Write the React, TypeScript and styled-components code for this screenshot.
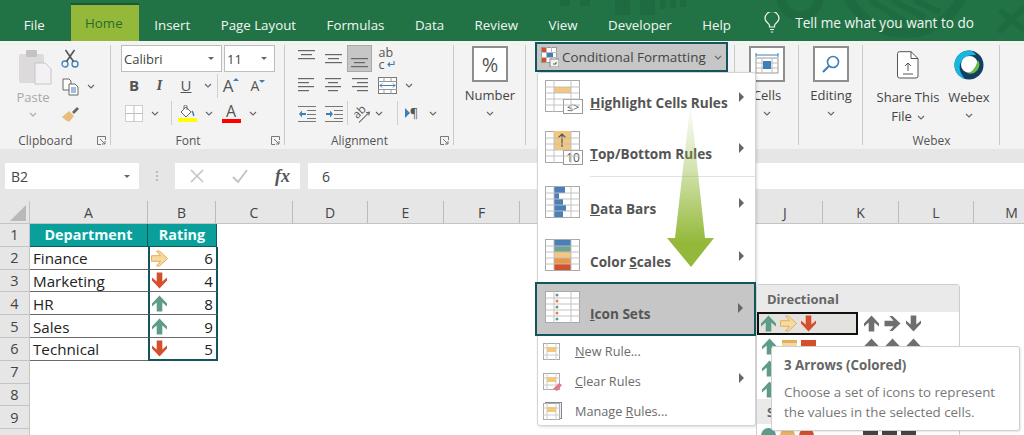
import React from "react";
import styled, { createGlobalStyle } from "styled-components";

const Global = createGlobalStyle`
  html, body { margin: 0; padding: 0; width: 1024px; height: 435px; overflow: hidden; background: #fff; }
  body { font-family: "Open Sans", "Liberation Sans", sans-serif; color: #444; }
`;

const TEAL = "#12565b";

const Page = styled.div`
  position: relative;
  width: 1024px;
  height: 435px;
  overflow: hidden;
  display: flex;
  flex-direction: column;
`;

/* ---------- title bar ---------- */
const TitleBar = styled.div`
  position: relative;
  height: 41px;
  flex: none;
  background: #217346;
  display: flex;
  align-items: stretch;
  padding-left: 8.5px;
  overflow: hidden;
`;
const Pattern = styled.svg`
  position: absolute;
  left: 520px;
  top: 0;
`;
const Tab = styled.div<{ $active?: boolean }>`
  position: relative;
  padding: 3px 15.25px 0;
  margin-top: 3px;
  display: flex;
  align-items: center;
  font-size: 13.3px;
  color: ${(p) => (p.$active ? "#2a6a2c" : "#f1f6f2")};
  background: ${(p) => (p.$active ? "#94b93a" : "transparent")};
  border-top: 2px solid ${(p) => (p.$active ? "#1c5a36" : "transparent")};
  box-sizing: border-box;
  ${(p) => (p.$active ? "margin-left: 11px; margin-right: 0; padding: 0 14px; width: 68px;" : "")}
`;
const TellMe = styled.div`
  position: relative;
  display: flex;
  align-items: center;
  margin-left: 18px;
  gap: 15px;
  padding-top: 3px;
  font-size: 13.6px;
  color: #f1f6f2;
`;

/* ---------- ribbon ---------- */
const Ribbon = styled.div`
  height: 108px;
  flex: none;
  background: #f3f3f3;
  display: flex;
`;
const Group = styled.div<{ $w: number }>`
  width: ${(p) => p.$w}px;
  flex: none;
  box-sizing: border-box;
  padding-top: 4px;
  display: flex;
  flex-direction: column;
  background: linear-gradient(#c9c9c9, #c9c9c9) right 4px / 1.5px 100px no-repeat;
`;
const GroupBody = styled.div`
  height: 82px;
  flex: none;
  display: flex;
`;
const GroupLabel = styled.div<{ $launcher?: boolean }>`
  position: relative;
  height: 22px;
  box-sizing: border-box;
  display: flex;
  align-items: center;
  justify-content: center;
  font-size: 12px;
  color: #555;
  padding-top: 4px;
  padding-right: ${(p) => (p.$launcher ? 20 : 0)}px;
`;
const Launcher = styled.svg`
  position: absolute;
  right: 5px;
  top: 9px;
`;
const PasteCol = styled.div`
  width: 50px;
  margin-left: 8px;
  display: flex;
  flex-direction: column;
  align-items: center;
  padding-top: 4px;
  color: #a8a8a8;
  font-size: 13px;
`;
const PasteIconWrap = styled.div`
  margin-left: 3px;
  line-height: 0;
`;
const PasteText = styled.span`
  margin-top: 3px;
  line-height: 18px;
`;
const Stack = styled.div<{ $ml?: number }>`
  display: flex;
  flex-direction: column;
  margin-left: ${(p) => p.$ml ?? 0}px;
`;
const ToolRow = styled.div<{ $h?: number; $pl?: number }>`
  height: ${(p) => p.$h ?? 27}px;
  flex: none;
  display: flex;
  align-items: center;
  padding-left: ${(p) => p.$pl ?? 0}px;
`;
const Tool = styled.div<{ $w: number; $selected?: boolean; $top?: number }>`
  width: ${(p) => p.$w}px;
  height: 100%;
  flex: none;
  display: flex;
  align-items: ${(p) => (p.$top !== undefined ? "flex-start" : "center")};
  justify-content: center;
  box-sizing: border-box;
  padding-top: ${(p) => p.$top ?? 0}px;
  color: #555;
  background: ${(p) => (p.$selected ? "#c6c6c6" : "transparent")};
  border: ${(p) => (p.$selected ? "1px solid #a9a9a9" : "0")};
`;
const Glyph = styled.span<{ $size?: number; $bold?: boolean; $italic?: boolean; $under?: boolean; $serif?: boolean }>`
  font-size: ${(p) => p.$size ?? 14}px;
  font-weight: ${(p) => (p.$bold ? 700 : 400)};
  font-style: ${(p) => (p.$italic ? "italic" : "normal")};
  text-decoration: ${(p) => (p.$under ? "underline" : "none")};
  font-family: ${(p) => (p.$serif ? '"Liberation Serif", serif' : "inherit")};
  line-height: 1;
  color: #555;
`;
const VRule = styled.div`
  width: 1px;
  height: 24px;
  flex: none;
  background: #cfcfcf;
`;
const Select = styled.div<{ $w: number; $ml?: number }>`
  width: ${(p) => p.$w}px;
  margin-left: ${(p) => p.$ml ?? 0}px;
  height: 27px;
  box-sizing: border-box;
  border: 1px solid #bdbdbd;
  background: #fff;
  display: flex;
  align-items: center;
  justify-content: space-between;
  padding: 0 7px 0 2px;
  font-size: 13px;
  color: #444;
`;
const DownCaret = styled.span`
  width: 0;
  height: 0;
  border-left: 3px solid transparent;
  border-right: 3px solid transparent;
  border-top: 3px solid #666;
`;
const FontBar = styled.div<{ $color: string }>`
  width: 19px;
  height: 4px;
  background: ${(p) => p.$color};
`;
const ColorTool = styled.div`
  display: flex;
  flex-direction: column;
  align-items: center;
  line-height: 1;
`;
const AAUp = styled.div`
  display: flex;
  align-items: flex-start;
`;
const WrapText = styled.div`
  display: flex;
  flex-direction: column;
  font-size: 12.5px;
  line-height: 12px;
  color: #555;
`;
const WrapLine = styled.span`
  display: flex;
  align-items: center;
  gap: 1px;
`;
const RotWrap = styled.div`
  display: flex;
  flex-direction: column;
  align-items: center;
  font-size: 11.5px;
  line-height: 10px;
  color: #555;
  transform: rotate(-45deg);
`;
const BigCol = styled.div<{ $w: number; $ml?: number }>`
  width: ${(p) => p.$w}px;
  margin-left: ${(p) => p.$ml ?? 0}px;
  flex: none;
  display: flex;
  flex-direction: column;
  align-items: center;
  font-size: 13px;
  color: #444;
`;
const SquareBtn = styled.div`
  width: 36px;
  height: 36px;
  margin-top: 1px;
  box-sizing: border-box;
  border: 2px solid #8e8e8e;
  background: #fff;
  display: flex;
  align-items: center;
  justify-content: center;
  font-size: 20px;
  color: #555;
`;
const BigText = styled.div`
  margin-top: 4px;
  line-height: 19px;
  text-align: center;
  white-space: nowrap;
`;
const ChevronWrap = styled.div`
  margin-top: 6px;
  line-height: 0;
`;
const InlineChev = styled.span`
  margin-left: 5px;
  display: inline-block;
  vertical-align: middle;
  line-height: 0;
`;
const CFButton = styled.div`
  width: 193px;
  height: 30px;
  margin: -3px 0 0 9px;
  box-sizing: border-box;
  border: 2px solid ${TEAL};
  background: #c6c6c6;
  display: flex;
  align-items: center;
  gap: 3px;
  padding-left: 4px;
  font-size: 13.4px;
  color: #444;
`;
const Strip = styled.div`
  height: 11px;
  flex: none;
  background: #e6e6e6;
`;

/* ---------- formula bar ---------- */
const FormulaBar = styled.div`
  height: 41px;
  flex: none;
  box-sizing: border-box;
  background: #e6e6e6;
  padding: 3px 0 12px 5px;
  display: flex;
`;
const NameBox = styled.div`
  width: 134px;
  flex: none;
  box-sizing: border-box;
  background: #fff;
  display: flex;
  align-items: center;
  justify-content: space-between;
  padding: 0 9px 0 6px;
  font-size: 14px;
  color: #444;
`;
const Grip = styled.div`
  width: 36px;
  flex: none;
  display: flex;
  flex-direction: column;
  align-items: center;
  justify-content: center;
  gap: 2px;
`;
const GripDot = styled.i`
  width: 2px;
  height: 2px;
  background: #bbb;
  display: block;
`;
const FxBox = styled.div`
  width: 125px;
  flex: none;
  background: #fff;
  display: flex;
  align-items: center;
  justify-content: space-between;
  padding: 0 10px 0 15px;
  box-sizing: border-box;
  color: #bbb;
`;
const FxText = styled.span`
  font-family: "Liberation Serif", serif;
  font-style: italic;
  font-size: 18px;
  font-weight: 700;
  color: #555;
`;
const FormulaInput = styled.div`
  margin-left: 8px;
  flex: 1;
  background: #fff;
  display: flex;
  align-items: center;
  padding-left: 14px;
  font-size: 14px;
  color: #444;
`;

/* ---------- sheet ---------- */
const Sheet = styled.div`
  flex: 1;
  background: #fff;
  display: flex;
  flex-direction: column;
`;
const ColHeaderRow = styled.div`
  height: 23px;
  flex: none;
  display: flex;
  background: #e6e6e6;
  border-bottom: 1px solid #c4c4c4;
  box-sizing: border-box;
`;
const Corner = styled.div`
  width: 30px;
  flex: none;
  display: flex;
  align-items: flex-end;
  justify-content: flex-end;
  padding: 0 2px 2px 0;
  box-sizing: border-box;
  border-right: 1px solid #c4c4c4;
`;
const ColHead = styled.div<{ $w: number }>`
  width: ${(p) => p.$w}px;
  flex: none;
  box-sizing: border-box;
  border-right: 1px solid #bcbcbc;
  display: flex;
  align-items: center;
  justify-content: center;
  font-size: 14px;
  color: #444;
`;
const Row = styled.div`
  height: 22.8px;
  flex: none;
  display: flex;
`;
const RowHead = styled.div`
  width: 30px;
  flex: none;
  box-sizing: border-box;
  background: #e6e6e6;
  border-right: 1px solid #c4c4c4;
  border-bottom: 1px solid #c4c4c4;
  display: flex;
  align-items: center;
  justify-content: center;
  font-size: 14.5px;
  color: #444;
`;
const HeadCell = styled.div<{ $w: number }>`
  width: ${(p) => p.$w}px;
  flex: none;
  box-sizing: border-box;
  background: #0b9f9c;
  color: #f2ffff;
  font-weight: 700;
  font-size: 14.4px;
  border-right: 1px solid #0c5c5c;
  border-bottom: 1px solid #0c5c5c;
  display: flex;
  align-items: center;
  justify-content: center;
`;
const DeptCell = styled.div`
  width: 118px;
  flex: none;
  box-sizing: border-box;
  padding: 1px 0 0 3px;
  font-size: 15.2px;
  color: #222;
  border-bottom: 1px solid #6a6a6a;
  display: flex;
  align-items: center;
`;
const RatingCell = styled.div<{ $last?: boolean }>`
  width: 70px;
  flex: none;
  box-sizing: border-box;
  padding: 1px 3px 0 1px;
  font-size: 15.2px;
  color: #222;
  border-left: 2px solid ${TEAL};
  border-right: 2px solid ${TEAL};
  border-bottom: ${(p) => (p.$last ? `2px solid ${TEAL}` : "1px solid #6a6a6a")};
  display: flex;
  align-items: center;
  justify-content: space-between;
`;

/* ---------- menus ---------- */
const Menu = styled.div`
  position: absolute;
  left: 537px;
  top: 72px;
  width: 219px;
  height: 354px;
  box-sizing: border-box;
  background: #fff;
  border: 1px solid #d4d4d4;
  border-radius: 3px;
  box-shadow: 1px 1px 3px rgba(0, 0, 0, 0.15);
  display: flex;
  flex-direction: column;
  padding-top: 1px;
`;
const BigItem = styled.div<{ $h?: number; $selected?: boolean; $low?: number }>`
  height: ${(p) => p.$h ?? 52}px;
  flex: none;
  box-sizing: border-box;
  display: flex;
  align-items: center;
  margin: ${(p) => (p.$selected ? "0 -1px 0 -3px" : "0")};
  padding: ${(p) => p.$low ?? 0}px 11px 0 ${(p) => (p.$selected ? 8 : 7)}px;
  background: ${(p) => (p.$selected ? "#c6c6c6" : "transparent")};
  border: ${(p) => (p.$selected ? `2px solid ${TEAL}` : "0")};
`;
const BigLabel = styled.div`
  margin: 5px 0 0 7px;
  flex: 1;
  font-size: 13.6px;
  font-weight: 700;
  color: #555;
  white-space: nowrap;
`;
const Tri = styled.span`
  margin-top: -6px;
  width: 0;
  height: 0;
  border-top: 5px solid transparent;
  border-bottom: 5px solid transparent;
  border-left: 5px solid #666;
`;
const MenuSep = styled.div`
  height: 1px;
  flex: none;
  margin-left: 52px;
  background: #e2e2e2;
`;
const SmallItem = styled.div`
  height: 30px;
  flex: none;
  display: flex;
  align-items: center;
  padding: 0 11px 0 5px;
`;
const SmallLabel = styled.div`
  margin-left: 12px;
  flex: 1;
  font-size: 12.7px;
  color: #6b6b6b;
  white-space: nowrap;
`;
const Sub = styled.div`
  position: absolute;
  left: 756px;
  top: 284px;
  width: 204px;
  height: 170px;
  box-sizing: border-box;
  background: #fff;
  border: 1px solid #cdcdcd;
  border-radius: 3px;
  display: flex;
  flex-direction: column;
`;
const SubHead = styled.div<{ $h?: number }>`
  height: ${(p) => p.$h ?? 27}px;
  flex: none;
  background: #eaeaea;
  display: flex;
  align-items: center;
  padding-left: 10px;
  font-size: 13px;
  font-weight: 700;
  color: #666;
`;
const SubRow = styled.div<{ $h?: number }>`
  height: ${(p) => p.$h ?? 22}px;
  flex: none;
  display: flex;
  align-items: center;
`;
const IconSet = styled.div<{ $active?: boolean }>`
  width: 101px;
  height: 100%;
  flex: none;
  box-sizing: border-box;
  display: flex;
  align-items: center;
  gap: ${(p) => (p.$active ? 3 : 4)}px;
  padding-left: ${(p) => (p.$active ? 1 : 4)}px;
  background: ${(p) => (p.$active ? "#e4e2df" : "transparent")};
  border: ${(p) => (p.$active ? "2px solid #111" : "0")};
`;
const IconSetR = styled.div`
  display: flex;
  align-items: center;
  gap: 4px;
  padding-left: 5px;
`;
const Tooltip = styled.div`
  position: absolute;
  left: 771px;
  top: 346px;
  width: 249px;
  height: 85px;
  box-sizing: border-box;
  background: #fff;
  border: 1px solid #cfcfcf;
  border-radius: 3px;
  box-shadow: 1px 1px 2px rgba(0, 0, 0, 0.1);
  padding: 8px 12px;
  color: #777;
  font-size: 13.3px;
  line-height: 20px;
`;
const TipTitle = styled.div`
  font-weight: 700;
  color: #666;
  margin-bottom: 7px;
`;
const GreenArrow = styled.svg`
  position: absolute;
  left: 660px;
  top: 100px;
  pointer-events: none;
`;
const BigSquareIcon = styled.svg`
  display: block;
  margin-top: -6px;
`;
const FlatIcon = styled.div<{ $c: string; $b: string }>`
  width: 15px;
  height: 13px;
  box-sizing: border-box;
  background: ${(p) => p.$c};
  border-top: 3px solid ${(p) => p.$b};
`;
const Dot = styled.div<{ $c: string; $square?: boolean }>`
  width: 15px;
  height: 15px;
  flex: none;
  border-radius: ${(p) => (p.$square ? "2px" : "50%")};
  background: ${(p) => p.$c};
`;

/* ---------- icons ---------- */
const Chevron = ({ c = "#666" }: { c?: string }) => (
  <svg width="8" height="5" viewBox="0 0 8 5">
    <path d="M1 1l3 3 3-3" fill="none" stroke={c} strokeWidth="1.1" />
  </svg>
);
const UP = "M8 .5L15.5 8.5V11.5L10.8 7.5V16.5H5.2V7.5L.5 11.5V8.5Z";
const Arrow = ({ dir, c, stroke }: { dir: "up" | "down" | "right"; c: string; stroke?: string }) => {
  const r = dir === "up" ? 0 : dir === "down" ? 180 : 90;
  return (
    <svg width="17" height="17" viewBox="-.5 0 17 17">
      <path d={UP} fill={c} stroke={stroke ?? "none"} strokeWidth={stroke ? 1 : 0} transform={`rotate(${r} 8 8.5)`} />
    </svg>
  );
};
const GREEN = "#5d9c88";
const RED = "#d4502c";
const Up = () => <Arrow dir="up" c={GREEN} />;
const Down = () => <Arrow dir="down" c={RED} />;
const Side = () => <Arrow dir="right" c="#f6d9a0" stroke="#e5ad5c" />;

const Lines = ({ rows, w = 17 }: { rows: [number, number][]; w?: number }) => (
  <svg width={w} height={rows.length * 4 + 1} viewBox={`0 0 ${w} ${rows.length * 4 + 1}`}>
    {rows.map(([x, l], i) => (
      <rect key={i} x={x} y={i * 4 + 1} width={l} height="1.2" fill="#666" />
    ))}
  </svg>
);
const Paste = () => (
  <svg width="34" height="36" viewBox="0 0 34 36">
    <rect x="1" y="5" width="25" height="29" rx="2" fill="#dcdada" />
    <rect x="8" y="1" width="11" height="7" rx="1" fill="#c4c2c2" />
    <path d="M17 14H27L33 20V35H17Z" fill="#f3f1f4" stroke="#c7c5c7" />
  </svg>
);
const Scissors = () => (
  <svg width="18" height="19" viewBox="0 0 18 19">
    <circle cx="4" cy="15" r="3" fill="none" stroke="#3f7fb8" strokeWidth="1.3" />
    <circle cx="14" cy="15" r="3" fill="none" stroke="#3f7fb8" strokeWidth="1.3" />
    <path d="M5.5 12.5L13.5 1M12.5 12.5L4.5 1" stroke="#555" strokeWidth="1.6" />
  </svg>
);
const Copy = () => (
  <svg width="17" height="18" viewBox="0 0 17 18">
    <path d="M1 1H7L9 3V12H1Z" fill="#fff" stroke="#666" />
    <path d="M7 6H13L16 9V17H7Z" fill="#fff" stroke="#666" />
    <path d="M9 10H14M9 12H14M9 14H14" stroke="#3f7fb8" />
  </svg>
);
const Brush = () => (
  <svg width="19" height="17" viewBox="0 0 19 17">
    <path d="M1 11L8 5L13 10L8 16Q4 14 1 11Z" fill="#e6bd7c" />
    <path d="M11 6L16 1L18 3L13 8Z" fill="#666" />
  </svg>
);
const Borders = () => (
  <svg width="18" height="17" viewBox="0 0 18 17">
    <rect x=".5" y=".5" width="17" height="16" fill="#fff" stroke="#cfcfcf" />
    <path d="M9 0V17M0 8.5H18" stroke="#bdbdbd" />
  </svg>
);
const Bucket = () => (
  <svg width="18" height="13" viewBox="0 0 18 13">
    <path d="M3 7L8 2L13 7L8 12Z" fill="#fff" stroke="#666" />
    <path d="M6 4V1.5a1.5 1.5 0 0 1 3 0V5" fill="none" stroke="#666" />
    <path d="M14 6q2 3 1.5 5" fill="none" stroke="#3f7fb8" strokeWidth="1.5" />
  </svg>
);
const Caret = ({ dir }: { dir: "up" | "down" }) => (
  <svg width="6" height="5" viewBox="0 0 6 5">
    <path d={dir === "up" ? "M0 4L3 1L6 4Z" : "M0 1L3 4L6 1Z"} fill="#3f7fb8" />
  </svg>
);
const ReturnArrow = () => (
  <svg width="9" height="7" viewBox="0 0 9 7">
    <path d="M8 0V3.5H2M4 1.5L2 3.5L4 5.5" fill="none" stroke="#3f7fb8" strokeWidth="1.1" />
  </svg>
);
const OrientArrow = () => (
  <svg width="16" height="5" viewBox="0 0 16 5">
    <path d="M0 2.5H15M12 .5L15 2.5L12 4.5" fill="none" stroke="#666" strokeWidth="1" />
  </svg>
);
const Merge = () => (
  <svg width="19" height="17" viewBox="0 0 19 17">
    <rect x=".5" y=".5" width="18" height="16" fill="#fff" stroke="#777" />
    <path d="M0 4.5H19M0 12.5H19M6 0V4M13 0V4M6 13V17M13 13V17" stroke="#999" />
    <path d="M2 8.5H17M4 6.5L2 8.5L4 10.5M15 6.5L17 8.5L15 10.5" fill="none" stroke="#3f7fb8" />
  </svg>
);
const Indent = ({ flip }: { flip?: boolean }) => (
  <svg width="18" height="17" viewBox="0 0 18 17">
    <path d="M0 1.5H18M9 5.5H18M9 9.5H18M9 13.5H18M0 16.5H18" stroke="#777" />
    <path d={flip ? "M1 8H5V5.5L8 9L5 12.5V10H1Z" : "M8 8H4V5.5L1 9L4 12.5V10H8Z"} fill="#3f7fb8" />
  </svg>
);
const Rtl = () => (
  <svg width="5" height="10" viewBox="0 0 5 10">
    <path d="M0 0L5 5L0 10Z" fill="#3f7fb8" />
  </svg>
);
const Launch = () => (
  <Launcher width="9" height="9" viewBox="0 0 9 9">
    <path d="M8.5 4V.5H.5V8.5H4M3 3L8 8M5 8H8V5" fill="none" stroke="#777" />
  </Launcher>
);
const CFIcon = () => (
  <svg width="18" height="20" viewBox="0 0 18 20">
    <rect x=".5" y=".5" width="15" height="15" fill="#fff" stroke="#999" />
    <path d="M0 5.5H16M0 10.5H16M5.5 0V16M10.5 0V16" stroke="#bbb" />
    <rect x="1" y="1" width="4" height="4" fill="#d4502c" />
    <rect x="6" y="6" width="6" height="4" fill="#3f7fb8" />
    <rect x="1" y="11" width="4" height="4" fill="#d4502c" />
    <rect x="9" y="12" width="9" height="8" fill="#f2f2f2" stroke="#888" />
    <path d="M15 15V17H12" fill="none" stroke="#555" />
  </svg>
);
const CellsIcon = () => (
  <svg width="24" height="24" viewBox="0 0 24 24">
    <path d="M1 3H23M1 1V5M23 1V5" stroke="#3f7fb8" />
    <rect x="1" y="6" width="22" height="15" fill="#fff" stroke="#999" />
    <path d="M1 11H23M1 16H23M7 6V21M17 6V21" stroke="#bbb" />
    <rect x="8" y="9" width="8" height="8" fill="#3f7fb8" />
  </svg>
);
const Search = () => (
  <svg width="20" height="20" viewBox="0 0 20 20">
    <circle cx="12" cy="8" r="5.5" fill="none" stroke="#3f7fb8" strokeWidth="1.6" />
    <path d="M8 12L2 18" stroke="#3f7fb8" strokeWidth="2.2" />
  </svg>
);
const Share = () => (
  <svg width="22" height="28" viewBox="0 0 22 28">
    <path d="M2.5 .7H14L21 7.5V25a2 2 0 0 1-2 2H2.5a2 2 0 0 1-2-2V2.7a2 2 0 0 1 2-2Z" fill="#fff" stroke="#555" />
    <path d="M14 .7V7.5H21" fill="none" stroke="#555" />
    <path d="M11 20V12M8 15L11 12L14 15" fill="none" stroke="#555" />
    <path d="M6 23H16" stroke="#555" />
  </svg>
);
const WebexLogo = () => (
  <svg width="30" height="30" viewBox="0 0 30 30">
    <circle cx="15" cy="15" r="14.5" fill="#123f63" />
    <path d="M15 .5A14.5 14.5 0 0 0 1 19A14.5 14.5 0 0 0 11 29Q3 20 7 12Q11 4 22 5Q19 .5 15 .5Z" fill="#18b7dd" />
    <circle cx="15.5" cy="14.5" r="8.5" fill="#fff" />
    <path d="M24 10a9 9 0 0 1-11 13q7 0 11-13Z" fill="#6cbb45" />
  </svg>
);
const Grid = ({ children }: { children?: React.ReactNode }) => (
  <BigSquareIcon width="38" height="34" viewBox="0 0 38 34">
    <rect x=".5" y=".5" width="34" height="31" fill="#fff" stroke="#a9a9a9" />
    {children}
    <path d="M0 7H35M0 13H35M0 19H35M0 25H35M9 0V32M26 0V32" stroke="#bdbdbd" strokeWidth=".9" fill="none" />
  </BigSquareIcon>
);
const Corner10 = ({ t, size }: { t: string; size: number }) => (
  <svg x="18" y="19" width="20" height="15" viewBox="0 0 20 15">
    <rect x=".5" y=".5" width="19" height="14" fill="#fff" stroke="#999" />
    <text x="10" y="12" textAnchor="middle" fontSize={size} fill="#555" fontFamily="Open Sans">{t}</text>
  </svg>
);
const SmallSheet = ({ eraser, stack }: { eraser?: boolean; stack?: boolean }) => (
  <svg width="20" height="19" viewBox="0 0 20 19">
    {stack && <rect x="2.5" y=".5" width="16" height="16" fill="#eee" stroke="#888" />}
    <rect x=".5" y="1.5" width="16" height="16" fill="#fff" stroke="#aaa" />
    <path d="M0 6H17M0 13H17M4 1V18M13 1V18" stroke="#ccc" fill="none" />
    <rect x="4" y="5" width="9" height="5" fill="#f2c77e" />
    {eraser && <path d="M10 17L16 11L19 13L14 19Z" fill="#e8768a" />}
  </svg>
);
const Bulb = () => (
  <svg width="16" height="21" viewBox="0 0 16 21">
    <path d="M5.5 15V13.5C5 11 1 10 1 6.5a7 7 0 0 1 14 0C15 10 11 11 10.5 13.5V15Z" fill="none" stroke="#f1f6f2" strokeWidth="1.2" />
    <path d="M6 17.5H10M6.8 20H9.2" stroke="#f1f6f2" strokeWidth="1.2" />
  </svg>
);
const CornerTri = () => (
  <svg width="17" height="16" viewBox="0 0 17 16">
    <path d="M16 0V16H0Z" fill="#b9b9b9" />
  </svg>
);

/* ---------- data ---------- */
const tabs = ["Insert", "Page Layout", "Formulas", "Data", "Review", "View", "Developer", "Help"];
const colWidths: [string, number][] = [
  ["A", 118], ["B", 68], ["C", 77], ["D", 75], ["E", 76], ["F", 76], ["", 76], ["", 76], ["", 76],
  ["J", 75], ["K", 76], ["L", 75], ["M", 76],
];
const rowsData: { d: string; v: number; i: React.ReactNode }[] = [
  { d: "Finance", v: 6, i: <Side /> },
  { d: "Marketing", v: 4, i: <Down /> },
  { d: "HR", v: 8, i: <Up /> },
  { d: "Sales", v: 9, i: <Up /> },
  { d: "Technical", v: 5, i: <Down /> },
];
const L: [number, number][] = [[0, 17], [3, 11], [0, 17]];
const LEFT: [number, number][] = [[0, 16], [0, 11], [0, 16], [0, 11]];
const MID: [number, number][] = [[0, 16], [3, 10], [0, 16], [3, 10]];
const RIGHT: [number, number][] = [[0, 16], [5, 11], [0, 16], [5, 11]];

export default function App() {
  return (
    <Page>
      <Global />
      <TitleBar>
        <Pattern width="504" height="41" viewBox="0 0 504 41">
          <g fill="#1f6b41">
            <path d="M40 0H50V6H40ZM60 0H70V6H60ZM95 0H110V15H95ZM120 0H135V15H120ZM140 0H146V9H140ZM150 0H156V8H150ZM160 0H166V7H160Z" />
          </g>
          <circle cx="280" cy="-3" r="19" fill="none" stroke="#1f6b41" strokeWidth="9" />
          <circle cx="385" cy="-30" r="63" fill="none" stroke="#1f6b41" strokeWidth="10" />
          <path d="M350 0L385 22M372 0L405 18M394 0L420 12M480 10L504 30M504 8L478 32" fill="none" stroke="#1f6b41" strokeWidth="6" />
        </Pattern>
        <Tab>File</Tab>
        <Tab $active>Home</Tab>
        {tabs.map((t) => (
          <Tab key={t}>{t}</Tab>
        ))}
        <TellMe>
          <Bulb />
          <span>Tell me what you want to do</span>
        </TellMe>
      </TitleBar>

      <Ribbon>
        <Group $w={111}>
          <GroupBody>
            <PasteCol>
              <PasteIconWrap><Paste /></PasteIconWrap>
              <PasteText>Paste</PasteText>
              <ChevronWrap><Chevron c="#aaa" /></ChevronWrap>
            </PasteCol>
            <Stack>
              <ToolRow $h={27}><Tool $w={24}><Scissors /></Tool></ToolRow>
              <ToolRow $h={29}><Tool $w={24}><Copy /></Tool><Tool $w={18}><Chevron /></Tool></ToolRow>
              <ToolRow $h={26}><Tool $w={24}><Brush /></Tool></ToolRow>
            </Stack>
          </GroupBody>
          <GroupLabel $launcher>Clipboard<Launch /></GroupLabel>
        </Group>

        <Group $w={174}>
          <GroupBody>
            <Stack $ml={10}>
              <ToolRow>
                <Select $w={101}>Calibri<DownCaret /></Select>
                <Select $w={51} $ml={2}>11<DownCaret /></Select>
              </ToolRow>
              <ToolRow $pl={1}>
                <Tool $w={24}><Glyph $size={15} $bold>B</Glyph></Tool>
                <Tool $w={27}><Glyph $size={15} $italic $bold $serif>I</Glyph></Tool>
                <Tool $w={26}><Glyph $size={15} $under>U</Glyph></Tool>
                <Tool $w={18}><Chevron /></Tool>
                <VRule />
                <Tool $w={26}><AAUp><Glyph $size={17}>A</Glyph><Caret dir="up" /></AAUp></Tool>
                <Tool $w={28}><AAUp><Glyph $size={14}>A</Glyph><Caret dir="down" /></AAUp></Tool>
              </ToolRow>
              <ToolRow $h={28} $pl={1}>
                <Tool $w={24}><Borders /></Tool>
                <Tool $w={18}><Chevron /></Tool>
                <Tool $w={7} />
                <VRule />
                <Tool $w={30}><ColorTool><Bucket /><FontBar $color="#ffff00" /></ColorTool></Tool>
                <Tool $w={14}><Chevron /></Tool>
                <Tool $w={30}><ColorTool><Glyph $size={16}>A</Glyph><FontBar $color="#ff0000" /></ColorTool></Tool>
                <Tool $w={14}><Chevron /></Tool>
              </ToolRow>
            </Stack>
          </GroupBody>
          <GroupLabel $launcher>Font<Launch /></GroupLabel>
        </Group>

        <Group $w={169}>
          <GroupBody>
            <Stack $ml={8}>
              <ToolRow>
                <Tool $w={27} $top={4}><Lines rows={L} /></Tool>
                <Tool $w={27} $top={8}><Lines rows={L} /></Tool>
                <Tool $w={25} $selected $top={11}><Lines rows={L} /></Tool>
                <Tool $w={29}>
                  <WrapText>
                    <span>ab</span>
                    <WrapLine>c<ReturnArrow /></WrapLine>
                  </WrapText>
                </Tool>
              </ToolRow>
              <ToolRow>
                <Tool $w={27}><Lines rows={LEFT} /></Tool>
                <Tool $w={27}><Lines rows={MID} /></Tool>
                <Tool $w={27}><Lines rows={RIGHT} /></Tool>
                <Tool $w={27}><Merge /></Tool>
                <Tool $w={15}><Chevron /></Tool>
              </ToolRow>
              <ToolRow $h={28}>
                <Tool $w={27}><Indent /></Tool>
                <Tool $w={27}><Indent flip /></Tool>
                <VRule />
                <Tool $w={25}><RotWrap>ab<OrientArrow /></RotWrap></Tool>
                <Tool $w={12}><Chevron /></Tool>
                <Tool $w={12} />
                <VRule />
                <Tool $w={27}><Rtl /><Glyph $size={13}>¶</Glyph></Tool>
                <Tool $w={16}><Chevron /></Tool>
              </ToolRow>
            </Stack>
          </GroupBody>
          <GroupLabel $launcher>Alignment<Launch /></GroupLabel>
        </Group>

        <Group $w={72}>
          <GroupBody>
            <BigCol $w={72}>
              <SquareBtn>%</SquareBtn>
              <BigText>Number</BigText>
              <ChevronWrap><Chevron /></ChevronWrap>
            </BigCol>
          </GroupBody>
        </Group>

        <Group $w={209}>
          <GroupBody>
            <CFButton>
              <CFIcon />
              <span>Conditional Formatting</span>
              <InlineChev><Chevron /></InlineChev>
            </CFButton>
          </GroupBody>
        </Group>

        <Group $w={64}>
          <GroupBody>
            <BigCol $w={64}>
              <SquareBtn><CellsIcon /></SquareBtn>
              <BigText>Cells</BigText>
              <ChevronWrap><Chevron /></ChevronWrap>
            </BigCol>
          </GroupBody>
        </Group>

        <Group $w={64}>
          <GroupBody>
            <BigCol $w={64}>
              <SquareBtn><Search /></SquareBtn>
              <BigText>Editing</BigText>
              <ChevronWrap><Chevron /></ChevronWrap>
            </BigCol>
          </GroupBody>
        </Group>

        <Group $w={137}>
          <GroupBody>
            <BigCol $w={78} $ml={6}>
              <ToolRow $h={39}><Share /></ToolRow>
              <BigText>Share This<br />File<InlineChev><Chevron /></InlineChev></BigText>
            </BigCol>
            <BigCol $w={44}>
              <ToolRow $h={39}><WebexLogo /></ToolRow>
              <BigText>Webex</BigText>
              <ChevronWrap><Chevron /></ChevronWrap>
            </BigCol>
          </GroupBody>
          <GroupLabel>Webex</GroupLabel>
        </Group>
      </Ribbon>
      <Strip />

      <FormulaBar>
        <NameBox>B2<DownCaret /></NameBox>
        <Grip><GripDot /><GripDot /><GripDot /></Grip>
        <FxBox>
          <svg width="14" height="14" viewBox="0 0 14 14"><path d="M1 1L13 13M13 1L1 13" stroke="#c4c4c4" strokeWidth="1.6" /></svg>
          <svg width="16" height="14" viewBox="0 0 16 14"><path d="M1 8L6 13L15 1" fill="none" stroke="#c4c4c4" strokeWidth="2" /></svg>
          <FxText>fx</FxText>
        </FxBox>
        <FormulaInput>6</FormulaInput>
      </FormulaBar>

      <Sheet>
        <ColHeaderRow>
          <Corner><CornerTri /></Corner>
          {colWidths.map(([c, w], i) => (
            <ColHead key={i} $w={w}>{c}</ColHead>
          ))}
        </ColHeaderRow>
        <Row>
          <RowHead>1</RowHead>
          <HeadCell $w={118}>Department</HeadCell>
          <HeadCell $w={69}>Rating</HeadCell>
        </Row>
        {rowsData.map((r, i) => (
          <Row key={r.d}>
            <RowHead>{i + 2}</RowHead>
            <DeptCell>{r.d}</DeptCell>
            <RatingCell $last={i === rowsData.length - 1}>
              {r.i}
              <span>{r.v}</span>
            </RatingCell>
          </Row>
        ))}
        {[7, 8, 9].map((n) => (
          <Row key={n}><RowHead>{n}</RowHead></Row>
        ))}
        <Row><RowHead /></Row>
      </Sheet>

      <Menu>
        <BigItem>
          <Grid>
            <rect x="9" y="7" width="17" height="6" fill="#f2c77e" />
            <Corner10 t="≤>" size={11} />
          </Grid>
          <BigLabel><u>H</u>ighlight Cells Rules</BigLabel>
          <Tri />
        </BigItem>
        <BigItem $h={50}>
          <Grid>
            <rect x="9" y="0" width="17" height="19" fill="#f2c77e" />
            <path d="M17 3V16M13.5 6.5L17 3L20.5 6.5" fill="none" stroke="#555" strokeWidth="1.2" />
            <Corner10 t="10" size={12} />
          </Grid>
          <BigLabel><u>T</u>op/Bottom Rules</BigLabel>
          <Tri />
        </BigItem>
        <MenuSep />
        <BigItem $h={53} $low={5}>
          <Grid>
            <rect x="9" y="1" width="11" height="6" fill="#4a7fb8" />
            <rect x="9" y="7" width="5" height="6" fill="#4a7fb8" />
            <rect x="9" y="13" width="9" height="6" fill="#4a7fb8" />
            <rect x="9" y="19" width="12" height="6" fill="#4a7fb8" />
            <rect x="9" y="25" width="9" height="6" fill="#4a7fb8" />
          </Grid>
          <BigLabel><u>D</u>ata Bars</BigLabel>
          <Tri />
        </BigItem>
        <BigItem $h={52} $low={5}>
          <Grid>
            <rect x="9" y="1" width="17" height="6" fill="#4a7fb8" />
            <rect x="9" y="7" width="17" height="6" fill="#6fa58e" />
            <rect x="9" y="13" width="17" height="6" fill="#f2c77e" />
            <rect x="9" y="19" width="17" height="6" fill="#e8964a" />
            <rect x="9" y="25" width="17" height="6" fill="#d4502c" />
          </Grid>
          <BigLabel>Color <u>S</u>cales</BigLabel>
          <Tri />
        </BigItem>
        <BigItem $selected $h={54} $low={3}>
          <Grid>
            <circle cx="12" cy="4" r="1.5" fill={GREEN} />
            <circle cx="12" cy="10" r="1.5" fill="#e8823a" />
            <circle cx="12" cy="16" r="1.5" fill={GREEN} />
            <circle cx="12" cy="22" r="1.5" fill="#e8823a" />
            <circle cx="12" cy="28" r="1.5" fill={GREEN} />
          </Grid>
          <BigLabel><u>I</u>con Sets</BigLabel>
          <Tri />
        </BigItem>
        <SmallItem><SmallSheet /><SmallLabel><u>N</u>ew Rule...</SmallLabel></SmallItem>
        <SmallItem><SmallSheet eraser /><SmallLabel><u>C</u>lear Rules</SmallLabel><Tri /></SmallItem>
        <SmallItem><SmallSheet stack /><SmallLabel>Manage <u>R</u>ules...</SmallLabel></SmallItem>
      </Menu>

      <GreenArrow width="64" height="170" viewBox="0 0 64 170">
        <defs>
          <linearGradient id="shaft" x1="0" y1="0" x2="0" y2="1">
            <stop offset="0" stopColor="#94b93a" stopOpacity="0" />
            <stop offset=".4" stopColor="#94b93a" stopOpacity=".4" />
            <stop offset=".85" stopColor="#94b93a" />
          </linearGradient>
        </defs>
        <path d="M30.5 3L45 138H54L31 167L7 138H15Z" fill="url(#shaft)" />
      </GreenArrow>

      <Sub>
        <SubHead>Directional</SubHead>
        <SubRow $h={23}>
          <IconSet $active><Up /><Side /><Down /></IconSet>
          <IconSetR><Arrow dir="up" c="#6e6e6e" /><Arrow dir="right" c="#6e6e6e" /><Arrow dir="down" c="#6e6e6e" /></IconSetR>
        </SubRow>
        <SubRow>
          <IconSet>
            <Up />
            <FlatIcon $c="#f6d9a0" $b="#e5ad5c" />
            <FlatIcon $c={RED} $b={RED} />
          </IconSet>
          <IconSetR><Arrow dir="up" c="#6e6e6e" /><Arrow dir="up" c="#6e6e6e" /><Arrow dir="up" c="#6e6e6e" /></IconSetR>
        </SubRow>
        <SubRow><IconSet><Up /></IconSet></SubRow>
        <SubRow $h={20}><IconSet><Up /></IconSet></SubRow>
        <SubHead $h={25}>S</SubHead>
        <SubRow>
          <IconSet>
            <Dot $c={GREEN} />
            <Dot $c="#e5b45f" />
            <Dot $c={RED} />
          </IconSet>
          <IconSetR>
            <Dot $c="#444" $square />
            <Dot $c="#444" $square />
            <Dot $c="#444" $square />
          </IconSetR>
        </SubRow>
      </Sub>

      <Tooltip>
        <TipTitle>3 Arrows (Colored)</TipTitle>
        Choose a set of icons to represent<br />the values in the selected cells.
      </Tooltip>
    </Page>
  );
}
